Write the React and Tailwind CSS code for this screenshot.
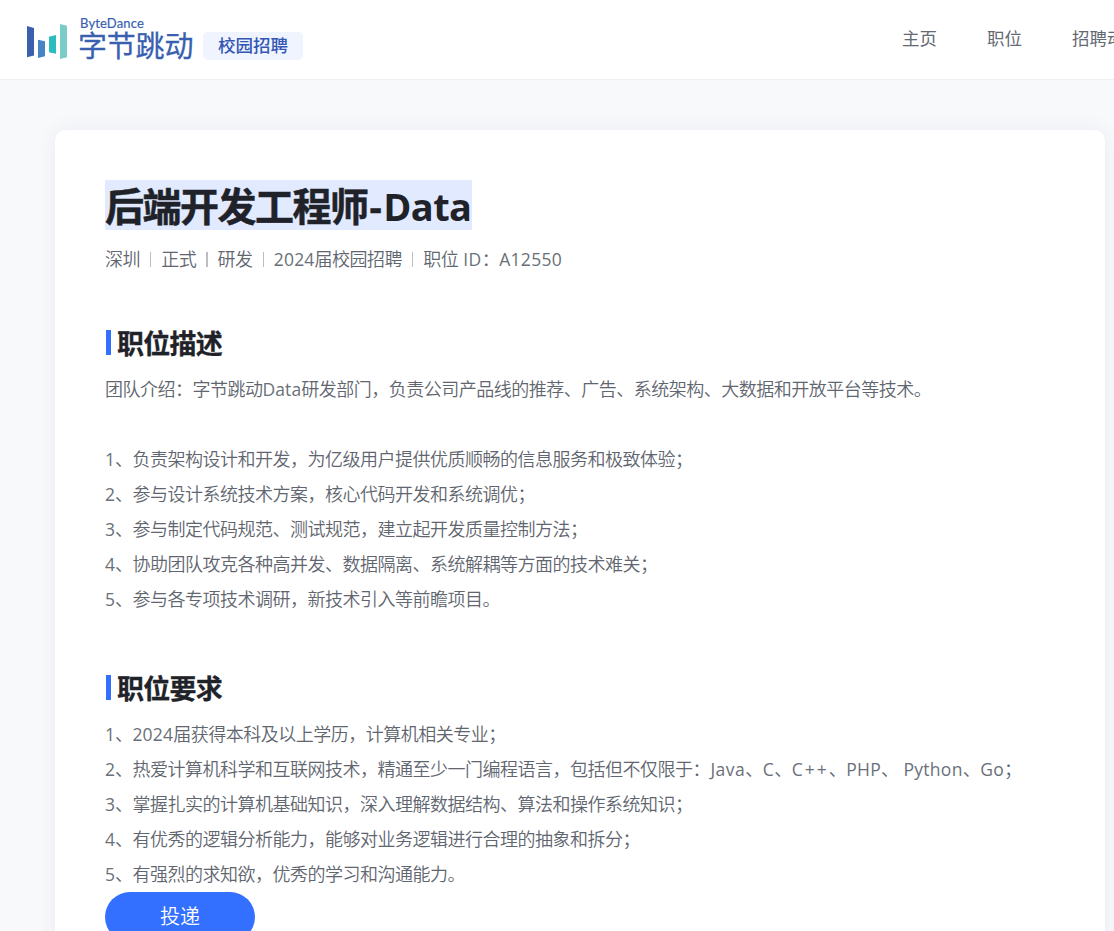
const description = [
  "团队介绍：字节跳动Data研发部门，负责公司产品线的推荐、广告、系统架构、大数据和开放平台等技术。",
  "",
  "1、负责架构设计和开发，为亿级用户提供优质顺畅的信息服务和极致体验；",
  "2、参与设计系统技术方案，核心代码开发和系统调优；",
  "3、参与制定代码规范、测试规范，建立起开发质量控制方法；",
  "4、协助团队攻克各种高并发、数据隔离、系统解耦等方面的技术难关；",
  "5、参与各专项技术调研，新技术引入等前瞻项目。",
];

const requirements = [
  "1、2024届获得本科及以上学历，计算机相关专业；",
  "2、热爱计算机科学和互联网技术，精通至少一门编程语言，包括但不仅限于：Java、C、C++、PHP、 Python、Go；",
  "3、掌握扎实的计算机基础知识，深入理解数据结构、算法和操作系统知识；",
  "4、有优秀的逻辑分析能力，能够对业务逻辑进行合理的抽象和拆分；",
  "5、有强烈的求知欲，优秀的学习和沟通能力。",
];

function latinClass(run) {
  if (/^\d$/.test(run)) return "text-[17.5px] tracking-[-0.1px]";
  if (/^\d+$/.test(run)) return "text-[17.5px] tracking-[0.2px]";
  if (run === "C++") return "text-[17.5px] tracking-[2px]";
  if (run === "Java") return "ml-[0.5px] text-[17.5px] tracking-[0.5px]";
  if (run === "Data") return "text-[17.5px] tracking-[0.1px]";
  if (run === " ID") return "text-[17.5px] tracking-[0.4px]";
  return "text-[17.5px] tracking-[0.3px]";
}

// Latin runs are set a little smaller and lighter than the Chinese around them.
function Mixed({ text }) {
  return text.split(/([ -~]+)/).map((run, i) =>
    i % 2 ? (
      <span key={i} className="font-normal text-[#6a7079]">
        <span className={latinClass(run)}>{run}</span>
      </span>
    ) : (
      run
    ),
  );
}

function Logo() {
  return (
    <div className="flex items-start">
      <svg width="42" height="36" viewBox="0 0 42 36" className="mt-[24px]">
        <path d="M1 2 L8 4 V31.5 L1 33.3 Z" fill="#3b5fae" />
        <path d="M12 15.8 L19 17.3 V32.3 L12 34 Z" fill="#4783c5" />
        <path d="M23 12.8 L30 11 V29.8 L23 28.2 Z" fill="#2bbcc0" />
        <path d="M34 0 L41 1.7 V33.3 L34 35 Z" fill="#7accc6" />
      </svg>
      <div className="ml-[10px] mt-[14px] flex w-[117px] flex-col whitespace-nowrap text-[#385fb0]">
        <span className="pl-[2px] font-[Lato] text-[13px] leading-[18px] tracking-[0.15px] [-webkit-text-stroke:0.2px_#385fb0]">
          ByteDance
        </span>
        <span className="text-[29px] font-normal leading-[28px] tracking-[-0.2px] [-webkit-text-stroke:0.3px_#385fb0]">
          字节跳动
        </span>
      </div>
      <div className="ml-[8px] mt-[32px] flex h-[28px] w-[100px] items-center justify-center rounded-[5px] bg-[#f0f4ff] pb-px text-[17.5px] font-medium text-[#3357b4]">
        校园招聘
      </div>
    </div>
  );
}

function Separator() {
  return <span className="mx-[10px] h-[15px] w-[1.25px] bg-[#bbbfc4]" />;
}

function Section({ title, lines, className }) {
  return (
    <section className={className}>
      <h2 className="flex h-[35px] items-start text-[27px] font-bold leading-[33px] tracking-[-0.75px] text-[#1f2329] [-webkit-text-stroke:0.3px_#1f2329]">
        <span className="ml-px mr-[6px] mt-[3px] h-[25px] w-[5px] bg-[#3370ff]" />
        {title}
      </h2>
      <div className="mt-[10px] text-[18px] font-[350] tracking-[-0.5px]">
        {lines.map((line, i) => (
          <p key={i} className="h-[35px] whitespace-nowrap leading-[35px]">
            <Mixed text={line} />
          </p>
        ))}
      </div>
    </section>
  );
}

export default function App() {
  return (
    <div className="h-[931px] w-full overflow-hidden bg-[#f8f9fb] font-['Open_Sans','Noto_Sans_CJK_SC',sans-serif] text-[17.5px] text-[#5f666f]">
      <header className="flex h-[80px] items-start justify-between overflow-hidden border-b border-[#eff0f1] bg-white pl-[26px]">
        <Logo />
        <nav className="flex w-[212px] gap-[50px] overflow-hidden whitespace-nowrap pt-[21px] text-[17.5px] leading-[35px] text-[#646a73]">
          <a className="shrink-0">主页</a>
          <a className="shrink-0">职位</a>
          <a className="shrink-0">招聘动态</a>
        </nav>
      </header>
      <main className="ml-[55px] mt-[50px] h-[900px] w-[1050px] rounded-[10px] bg-white px-[50px] pt-[50px] shadow-[0_0_20px_rgba(31,60,120,0.07)]">
        <h1 className="h-[50px] whitespace-nowrap text-[39px] font-bold leading-[51px] tracking-[-1.5px] text-[#1f2329] [-webkit-text-stroke:0.5px_#1f2329]">
          <span className="block h-[50px] w-[367px] bg-[#e1eaff]">
            后端开发工程师
            <span className="ml-[2px] text-[38px] tracking-[1.5px]">-</span>
            <span className="text-[38px] tracking-[-0.6px] [-webkit-text-stroke:0px]">Data</span>
          </span>
        </h1>
        <div className="mt-[12px] flex h-[35px] items-center whitespace-nowrap text-[18px] font-[350] tracking-[-0.5px]">
          <span>深圳</span>
          <Separator />
          <span>正式</span>
          <Separator />
          <span>研发</span>
          <Separator />
          <span>
            <Mixed text="2024届校园招聘" />
          </span>
          <Separator />
          <span>
            <Mixed text="职位 ID：A12550" />
          </span>
        </div>
        <Section title="职位描述" lines={description} className="mt-[50px]" />
        <Section title="职位要求" lines={requirements} className="mt-[55px]" />
        <button className="flex h-[50px] w-[150px] items-center justify-center rounded-full bg-[#3370ff] text-[20px] font-[350] text-white">
          投递
        </button>
      </main>
    </div>
  );
}
